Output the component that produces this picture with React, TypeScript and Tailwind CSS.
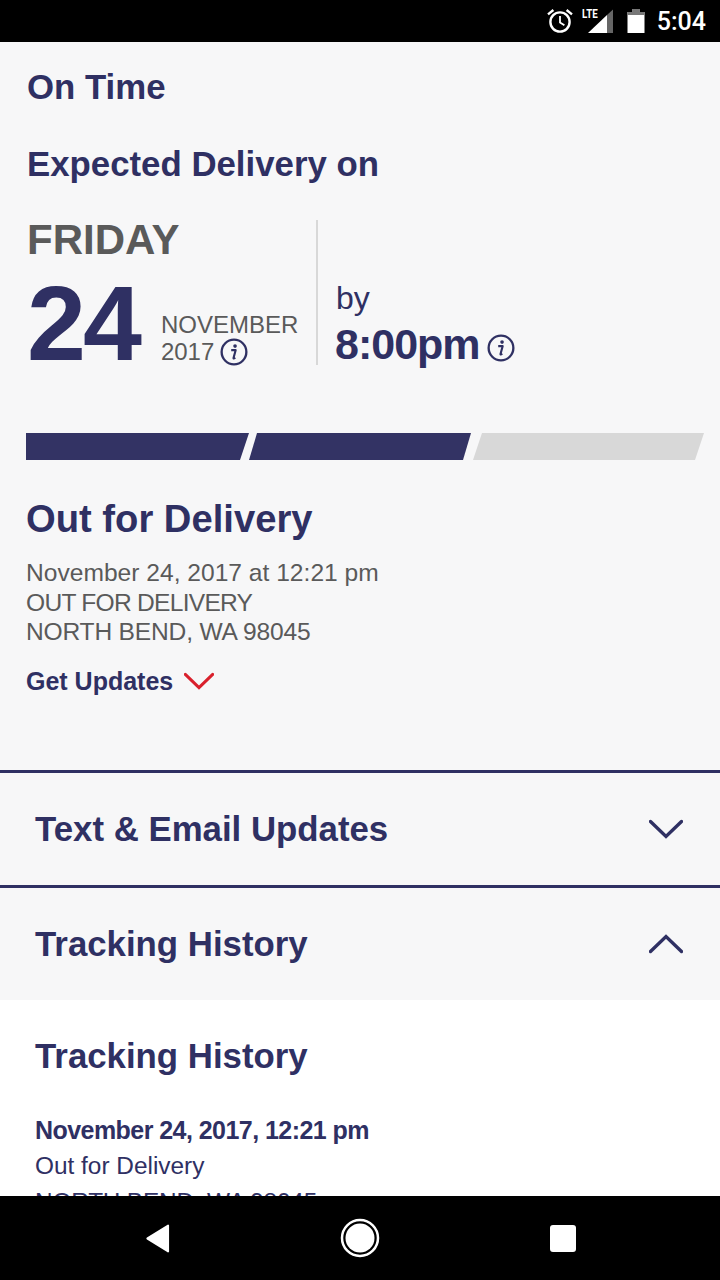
import * as React from "react";

const navy = "text-[#2f3063]";

const InfoIcon = ({ className = "" }: { className?: string }) => (
  <svg width="28" height="28" viewBox="0 0 29 29" className={`shrink-0 ${className}`}>
    <circle cx="14.5" cy="14.5" r="12.8" fill="none" stroke="#2f3063" strokeWidth="2.4" />
    <circle cx="15.6" cy="8.4" r="1.9" fill="#2f3063" />
    <path d="M11.6 12.6h4.6l-2.2 8.2c-.1.5.3.7 1.8-.4" fill="none" stroke="#2f3063" strokeWidth="2.2" strokeLinejoin="round" />
  </svg>
);

const Chevron = ({ up = false, color = "#2f3063", width = 34 }: { up?: boolean; color?: string; width?: number }) => (
  <svg width={width} height="20" viewBox="0 0 34 20">
    <path
      d={up ? "M1.5 17.5 17 2.5l15.5 15" : "M1.5 2.5 17 17.5l15.5-15"}
      fill="none"
      stroke={color}
      strokeWidth="3.4"
      strokeLinecap="round"
      strokeLinejoin="miter"
    />
  </svg>
);

const StatusBar = () => (
  <div className="flex h-[42px] shrink-0 items-center justify-end bg-black pr-[14px] text-white">
    {/* alarm */}
    <svg width="26" height="26" viewBox="0 0 26 26" className="mr-[9px]">
      <circle cx="13" cy="14" r="9.6" fill="none" stroke="#fff" strokeWidth="2.4" />
      <path d="M13 8v6.4l4.4 2.8" fill="none" stroke="#fff" strokeWidth="1.8" />
      <path d="M1 6.4 6.4 2M25 6.4 19.6 2" fill="none" stroke="#fff" strokeWidth="2.4" />
    </svg>
    {/* signal with LTE */}
    <div className="relative mr-[13px] h-[26px] w-[32px]">
      <span className="absolute left-0 top-[-2px] origin-left scale-x-75 text-[13px] font-bold leading-[16px] [font-family:'Roboto',sans-serif]">
        LTE
      </span>
      <svg width="32" height="26" viewBox="0 0 32 26" className="absolute left-0 top-0">
        <path d="M6 25 25 7v18z" fill="#fff" />
        <path d="M25 7l6-5.5V25h-6z" fill="#666" />
      </svg>
    </div>
    {/* battery */}
    <svg width="18" height="26" viewBox="0 0 18 26" className="mr-[12px]">
      <path d="M5.5 1h7v3h5v21H.5V4h5z" fill="#fff" />
      <path d="M5.5 1h7v3h5v3H.5V4h5z" fill="#777" />
    </svg>
    <span className="text-[25px] font-medium leading-none [font-family:'Roboto',sans-serif]">5:04</span>
  </div>
);

const NavBar = () => (
  <div className="flex h-[84px] shrink-0 items-center justify-center bg-black">
    <div className="flex w-[440px] items-center justify-between pl-[6px] pr-[4px]">
      <svg width="24" height="29" viewBox="0 0 26 30" preserveAspectRatio="none">
        <path d="M25 1.5v27a1 1 0 0 1-1.6.7L1 16a1.3 1.3 0 0 1 0-2L23.4.8A1 1 0 0 1 25 1.5z" fill="#fff" />
      </svg>
      <svg width="40" height="40" viewBox="0 0 40 40">
        <circle cx="20" cy="20" r="18" fill="none" stroke="#fff" strokeWidth="2.5" />
        <circle cx="20" cy="20" r="14.5" fill="#fff" />
      </svg>
      <div className="h-[27px] w-[26px] rounded-[3px] bg-white" />
    </div>
  </div>
);

const Segment = ({ clip, className }: { clip: string; className: string }) => (
  <div className={`h-[27px] ${clip} ${className}`} />
);

const AccordionRow = ({ title, up = false }: { title: string; up?: boolean }) => (
  <div className="flex h-[115px] items-center justify-between border-t-[3px] border-[#2f3063] pl-[35px] pr-[37px]">
    <span className={`pt-[2px] text-[34.8px] font-bold leading-none ${navy}`}>{title}</span>
    <Chevron up={up} />
  </div>
);

export default function App() {
  return (
    <div className="flex h-[1280px] w-[720px] flex-col overflow-hidden bg-[#f7f7f8] [font-family:'Liberation_Sans',Arial,sans-serif]">
      <StatusBar />

      <div className="min-h-0 flex-1 overflow-hidden">
        <div className="px-[27px] pt-[26px]">
          <h2 className={`text-[34.8px] font-bold leading-[38px] ${navy}`}>On Time</h2>
          <h2 className={`mt-[39px] text-[34.8px] font-bold leading-[38px] ${navy}`}>Expected Delivery on</h2>

          <div className="mt-[37px] flex h-[145px]">
            <div className="w-[291px] border-r-2 border-[#d8d8d8]">
              <div className="text-[42px] font-bold leading-[40px] text-[#5a5a5a]">FRIDAY</div>
              <div className="mt-[18px] flex">
                <span className={`text-[106px] font-bold leading-[90px] tracking-[-3px] ${navy}`}>24</span>
                <div className="ml-[22px] mt-[34px] text-[24px] leading-[26px] text-[#5a5a5a]">
                  <div>NOVEMBER</div>
                  <div className="flex items-center gap-[6px]">
                    2017 <InfoIcon />
                  </div>
                </div>
              </div>
            </div>
            <div className="pl-[18px] pt-[61px]">
              <div className={`text-[32px] leading-[34px] ${navy}`}>by</div>
              <div className="-ml-[1px] mt-[6px] flex items-center gap-[7px]">
                <span className={`text-[43px] font-bold leading-[46px] tracking-[-1px] ${navy}`}>8:00pm</span>
                <InfoIcon className="mt-[7px]" />
              </div>
            </div>
          </div>
        </div>

        <div className="mt-[68px] flex pl-[26px]">
          <Segment clip="w-[223px] [clip-path:polygon(0_0,100%_0,214px_100%,0_100%)]" className="bg-[#333364]" />
          <Segment clip="w-[222px] [clip-path:polygon(8px_0,100%_0,214px_100%,0_100%)]" className="bg-[#333364]" />
          <Segment clip="ml-[2px] w-[231px] [clip-path:polygon(9px_0,100%_0,222px_100%,0_100%)]" className="bg-[#d8d8d8]" />
        </div>

        <div className="px-[26px]">
          <h2 className={`mt-[38px] text-[38.2px] font-bold leading-[42px] ${navy}`}>Out for Delivery</h2>
          <div className="mt-[18px] text-[24.6px] leading-[29.5px] text-[#5a5a5a]">
            <div>November 24, 2017 at 12:21 pm</div>
            <div className="tracking-[-0.75px]">OUT FOR DELIVERY</div>
            <div className="tracking-[-0.2px]">NORTH BEND, WA 98045</div>
          </div>
          <div className="mt-[19px] flex items-center gap-[11px]">
            <span className={`text-[25px] font-bold leading-[30px] ${navy}`}>Get Updates</span>
            <Chevron color="#d9202c" width={30} />
          </div>
        </div>

        <div className="mt-[74px]">
          <AccordionRow title="Text & Email Updates" />
          <AccordionRow title="Tracking History" up />
        </div>

        <div className="bg-white px-[35px] pt-[37px]">
          <h2 className={`text-[34.8px] font-bold leading-[38px] ${navy}`}>Tracking History</h2>
          <div className={`mt-[39px] text-[25px] font-bold leading-[32px] tracking-[-0.55px] ${navy}`}>
            November 24, 2017, 12:21 pm
          </div>
          <div className={`mt-[2px] text-[24.4px] leading-[36px] ${navy}`}>
            <div>Out for Delivery</div>
            <div className="tracking-[-0.2px]">NORTH BEND, WA 98045</div>
          </div>
        </div>
      </div>

      <NavBar />
    </div>
  );
}
